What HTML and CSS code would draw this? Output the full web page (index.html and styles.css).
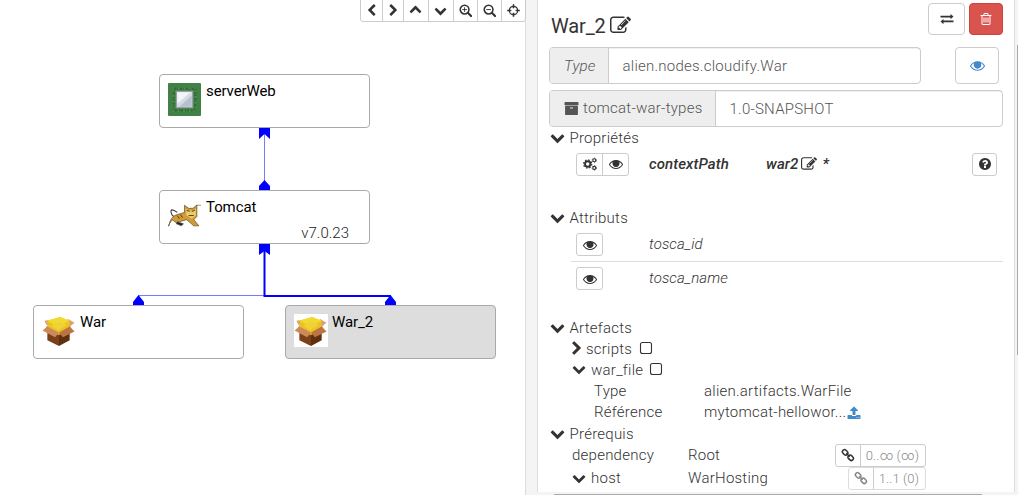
FILE: index.html
```html
<!DOCTYPE html>
<html lang="fr">
<head>
<meta charset="utf-8">
<title>Topology</title>
<link rel="stylesheet" href="styles.css">
</head>
<body>
<svg class="defs" aria-hidden="true">
<symbol id="left" viewBox="0 0 1792 1792"><path d="M1427 301l-531 531 531 531q19 19 19 45t-19 45l-166 166q-19 19-45 19t-45-19l-742-742q-19-19-19-45t19-45l742-742q19-19 45-19t45 19l166 166q19 19 19 45t-19 45z"/></symbol>
<symbol id="down" viewBox="0 0 1792 1792"><path d="M1683 808l-742 741q-19 19-45 19t-45-19l-742-741q-19-19-19-45.5t19-45.5l166-165q19-19 45-19t45 19l531 531 531-531q19-19 45-19t45 19l166 165q19 19 19 45.5t-19 45.5z"/></symbol>
<symbol id="eye" viewBox="0 0 1792 1792"><path d="M1664 960q-152-236-381-353 61 104 61 225 0 185-131.5 316.5t-316.5 131.5-316.5-131.5-131.5-316.5q0-121 61-225-229 117-381 353 133 205 333.5 326.5t434.5 121.5 434.5-121.5 333.5-326.5zM1792 960q0 34-20 69-140 230-376.500 368.500t-499.500 138.500-499.500-139-376.500-368q-20-35-20-69t20-69q140-229 376.500-368t499.500-139 499.500 139 376.500 368q20 35 20 69z"/><path d="M896 420a400 400 0 1 0 1 0zM900 545q34 0 34 40t-34 40q-150 10-170 170-5 40-40 40t-40-40q15-205 250-250z" fill-rule="evenodd"/></symbol>
<symbol id="edit" viewBox="0 0 1792 1792"><path d="M888 1184l116-116-152-152-116 116v56h96v96h56zm440-720q-16-16-33 1l-350 350q-17 17-1 33t33-1l350-350q17-17 1-33zm80 594v190q0 119-84.5 203.5t-203.5 84.5h-832q-119 0-203.5-84.5t-84.5-203.5v-832q0-119 84.5-203.5t203.5-84.5h832q63 0 117 25 15 7 18 23 3 17-9 29l-49 49q-14 14-32 8-23-6-45-6h-832q-66 0-113 47t-47 113v832q0 66 47 113t113 47h832q66 0 113-47t47-113v-126q0-13 9-22l64-64q15-15 35-7t20 29zm-96-738l288 288-672 672h-288v-288zm444 132l-92 92-288-288 92-92q28-28 68-28t68 28l152 152q28 28 28 68t-28 68z"/></symbol>
<symbol id="archive" viewBox="0 0 1792 1792"><path d="M1088 832q0-26-19-45t-45-19h-256q-26 0-45 19t-19 45 19 45 45 19h256q26 0 45-19t19-45zm576-192v960q0 26-19 45t-45 19h-1408q-26 0-45-19t-19-45v-960q0-26 19-45t45-19h1408q26 0 45 19t19 45zm64-448v256q0 26-19 45t-45 19h-1536q-26 0-45-19t-19-45v-256q0-26 19-45t45-19h1536q26 0 45 19t19 45z"/></symbol>
<symbol id="upload" viewBox="0 0 1792 1792"><path d="M1344 1472q0-26-19-45t-45-19-45 19-19 45 19 45 45 19 45-19 19-45zm256 0q0-26-19-45t-45-19-45 19-19 45 19 45 45 19 45-19 19-45zm128-224v320q0 40-28 68t-68 28h-1472q-40 0-68-28t-28-68v-320q0-40 28-68t68-28h427q21 56 70.5 92t110.5 36h256q61 0 110.5-36t70.5-92h427q40 0 68 28t28 68zm-325-648q-17 40-59 40h-256v448q0 26-19 45t-45 19h-256q-26 0-45-19t-19-45v-448h-256q-42 0-59-40-17-39 14-69l448-448q18-19 45-19t45 19l448 448q31 30 14 69z"/></symbol>
<symbol id="trash" viewBox="0 0 1792 1792"><path d="M704 736v576q0 14-9 23t-23 9h-64q-14 0-23-9t-9-23v-576q0-14 9-23t23-9h64q14 0 23 9t9 23zm256 0v576q0 14-9 23t-23 9h-64q-14 0-23-9t-9-23v-576q0-14 9-23t23-9h64q14 0 23 9t9 23zm256 0v576q0 14-9 23t-23 9h-64q-14 0-23-9t-9-23v-576q0-14 9-23t23-9h64q14 0 23 9t9 23zm128 724v-948h-896v948q0 22 7 40.5t14.5 27 10.5 8.5h832q3 0 10.5-8.5t14.5-27 7-40.5zm-672-1076h448l-48-117q-7-9-17-11h-317q-10 2-17 11zm928 32v64q0 14-9 23t-23 9h-96v948q0 83-47 143.5t-113 60.5h-832q-66 0-113-58.5t-47-141.5v-952h-96q-14 0-23-9t-9-23v-64q0-14 9-23t23-9h309l70-167q15-37 54-63t79-26h320q40 0 79 26t54 63l70 167h309q14 0 23 9t9 23z"/></symbol>
<symbol id="help" viewBox="0 0 1792 1792"><path d="M1024 1376v-192q0-14-9-23t-23-9h-192q-14 0-23 9t-9 23v192q0 14 9 23t23 9h192q14 0 23-9t9-23zm256-672q0-88-55.5-163t-138.5-116-170-41q-243 0-371 213-15 24 8 42l132 100q7 6 19 6 16 0 25-12 53-68 86-92 34-24 86-24 48 0 85.5 26t37.5 59q0 38-20 61t-68 45q-63 28-115.5 86.5t-52.5 125.5v36q0 14 9 23t23 9h192q14 0 23-9t9-23q0-19 21.5-49.5t54.5-49.5q32-18 49-28.5t46-35 44.5-48 28-60.5 12.5-81zm384 192q0 209-103 385.5t-279.5 279.5-385.5 103-385.5-103-279.5-279.5-103-385.5 103-385.5 279.5-279.5 385.5-103 385.5 103 279.5 279.5 103 385.5z"/></symbol>
<symbol id="box" viewBox="0 0 14 14"><rect x="1.500" y="1.500" width="11" height="11" rx="2" fill="none" stroke="currentColor" stroke-width="1.100"/></symbol>
<symbol id="exchange" viewBox="0 0 14 14"><path d="M.5 3.800h10V1.900L13.500 4.600l-3 2.700V5.400H.5zM13.500 8.600h-10V6.900L.5 9.500l3 2.700v-1.900h10z"/></symbol>
<symbol id="plus" viewBox="0 0 14 14"><circle cx="6" cy="6" r="4.700" fill="none" stroke="currentColor" stroke-width="1.700"/><path d="M9.500 9.500l3.500 3.500" stroke="currentColor" stroke-width="2.300" stroke-linecap="round"/><path d="M3.500 6h5M6 3.500v5" stroke="currentColor"/></symbol>
<symbol id="minus" viewBox="0 0 14 14"><circle cx="6" cy="6" r="4.700" fill="none" stroke="currentColor" stroke-width="1.700"/><path d="M9.500 9.500l3.500 3.500" stroke="currentColor" stroke-width="2.300" stroke-linecap="round"/><path d="M3.500 6h5" stroke="currentColor"/></symbol>
<symbol id="cross" viewBox="0 0 14 14"><circle cx="7" cy="7" r="4.500" fill="none" stroke="currentColor" stroke-width="1.300"/><path d="M7 .2v4.500M7 9.300v4.500M.2 7h4.500M9.300 7h4.500" stroke="currentColor" stroke-width="1.700"/></symbol>
<symbol id="gears" viewBox="0 0 14 14"><circle cx="4.700" cy="7" r="2.700" fill="none" stroke="currentColor" stroke-width="1.900"/><circle cx="4.700" cy="7" r="4.100" fill="none" stroke="currentColor" stroke-width="1.200" stroke-dasharray="1.600 1.620"/><circle cx="11.300" cy="3.300" r="1.500" fill="none" stroke="currentColor" stroke-width="1.100"/><circle cx="11.300" cy="3.300" r="2.300" fill="none" stroke="currentColor" stroke-width=".7" stroke-dasharray="1.200 1.200"/><circle cx="11.300" cy="10.900" r="1.500" fill="none" stroke="currentColor" stroke-width="1.100"/><circle cx="11.300" cy="10.900" r="2.300" fill="none" stroke="currentColor" stroke-width=".7" stroke-dasharray="1.200 1.200"/></symbol>
<symbol id="link" viewBox="0 0 14 14"><g fill="none" stroke="currentColor" stroke-width="1.500"><rect x="1.300" y="2.300" width="5.800" height="4.200" rx="2" transform="rotate(45 4.200 4.300)"/><rect x="6.900" y="7.700" width="5.800" height="4.200" rx="2" transform="rotate(45 9.800 9.700)"/><path d="M5.300 5.300l3.400 3.400"/></g></symbol>
<symbol id="crate" viewBox="0 0 34 34"><path d="M5 17l12 3v13L5 27z" fill="#7c4019"/><path d="M17 20l11-5v12l-11 6z" fill="#5f300f"/><path d="M2 7l7-1v8l-5-3zM26 5l7 4-6 5z" fill="#d9a07a"/><path d="M4 13L17 8l12 5v2l-12 7L4 16z" fill="#d6a416"/><path d="M5 7l13-4 10 4v7l-12 6L5 14z" fill="#e8c422"/><path d="M5 7l13-4 10 4-12 6z" fill="#f3d92f"/><path d="M9 12l8-4 8 3-9 6z" fill="#f0d238"/><path d="M5 13L0 17l13 7 4-5z" fill="#cc8a5c"/><path d="M17 19l11-6 5 5-12 6z" fill="#bd7445"/></symbol>
</svg>
<div class="app">
<main class="canvas">
  <div class="toolbar">
    <span><svg><use href="#left"/></svg></span><span><svg class="flip"><use href="#left"/></svg></span><span><svg class="turn"><use href="#down"/></svg></span><span><svg><use href="#down"/></svg></span><span><svg><use href="#plus"/></svg></span><span><svg><use href="#minus"/></svg></span><span><svg><use href="#cross"/></svg></span>
  </div>
  <svg class="links" viewBox="0 0 525 495">
    <path d="M264.500 130v56" stroke="#7a7aff" stroke-width="1"/>
    <path d="M138.500 300v-4.500H264" stroke="#7a7aff" fill="none"/>
    <path d="M264.500 244v52h125.500v6" stroke="#00f" stroke-width="2" fill="none"/>
    <g fill="#00f"><path d="M259 128h11v11l-5.500-5-5.500 5zM259 190v-4l5.500-6 5.500 6v4zM259 243h11v12l-5.500-4-5.500 4zM133 306v-4l5.500-7 5.500 7v4zM385 306v-4l5.500-7 5.500 7v4z"/></g>
  </svg>
  <div class="node server"><svg class="pic" viewBox="0 0 32 32"><rect width="32" height="32" rx="1" fill="#418145"/><rect x="5.500" y="5.500" width="21" height="21" fill="none" stroke="#2f6534" stroke-width="2" stroke-dasharray="2 1 1 2"/><rect x="5" y="5" width="22" height="22" fill="none" stroke="#7fa565" stroke-width=".8" stroke-dasharray="1 4"/><rect x="8" y="8" width="16" height="16" fill="#d5dae5" stroke="#8c999d"/><path d="M9 9h13L9 20z" fill="#f2f4f8"/><path d="M23 12v11H11z" fill="#b7c0cf"/></svg><b>serverWeb</b></div>
  <div class="node tomcat"><svg class="pic" viewBox="0 0 32 32"><path d="M9 14q-7-5-6 0t6 4" fill="none" stroke="#333"/><path d="M1 27q1-9 8-11l7-2V7l4 3h4l4-3v11l-3 3 5 6-5 0-7-6-7 2-3 1-4-3-4 6z" fill="#d19b38" stroke="#55401a" stroke-width=".6"/><path d="M17 10l3 2h5l2-2v7l-4 3-5-3z" fill="#eccb6c"/><path d="M18 12l3 1M26 12l-3 1M20 17h5M9 17l2 3M12 16l2 3" stroke="#332710" stroke-width=".8"/><path d="M9 23l6 2-2 2-5-2zM27 7h5" fill="#222" stroke="#555" stroke-width=".6"/></svg><b>Tomcat</b><i>v7.0.23</i></div>
  <div class="node war"><svg class="pic"><use href="#crate"/></svg><b>War</b></div>
  <div class="node war2"><svg class="pic"><use href="#crate"/></svg><b>War_2</b></div>
</main>
<aside class="panel">
  <header class="title"><h1>War_2</h1><svg><use href="#edit"/></svg><span class="swap"><svg><use href="#exchange"/></svg></span><span class="del"><svg><use href="#trash"/></svg></span></header>
  <div class="field-row"><div class="field type"><em>Type</em><span>alien.nodes.cloudify.War</span></div><span class="view"><svg><use href="#eye"/></svg></span></div>
  <div class="field archive"><label><svg><use href="#archive"/></svg>tomcat-war-types</label><span>1.0-SNAPSHOT</span></div>
  <div class="head"><svg><use href="#down"/></svg>Propriétés</div>
  <div class="prop main"><div class="group"><span><svg><use href="#gears"/></svg></span><span><svg><use href="#eye"/></svg></span></div><em>contextPath</em><em class="value">war2<svg><use href="#edit"/></svg>*</em><div class="group help"><span><svg><use href="#help"/></svg></span></div></div>
  <div class="head attr"><svg><use href="#down"/></svg>Attributs</div>
  <div class="prop"><div class="group"><span><svg><use href="#eye"/></svg></span></div><em>tosca_id</em></div>
  <div class="prop ruled"><div class="group"><span><svg><use href="#eye"/></svg></span></div><em>tosca_name</em></div>
  <div class="head arte"><svg><use href="#down"/></svg>Artefacts</div>
  <div class="sub scripts"><svg class="flip" viewBox="300 0 1280 1792"><use href="#left" width="1792" height="1792"/></svg>scripts<svg class="check"><use href="#box"/></svg></div>
  <div class="sub"><svg><use href="#down"/></svg>war_file<svg class="check"><use href="#box"/></svg></div>
  <div class="detail"><span>Type</span><span>alien.artifacts.WarFile</span></div>
  <div class="detail"><span>Référence</span><span>mytomcat-hellowor...</span><svg><use href="#upload"/></svg></div>
  <div class="head req"><svg><use href="#down"/></svg>Prérequis</div>
  <div class="need"><span class="name">dependency</span><span>Root</span><div class="group count"><span><svg><use href="#link"/></svg></span><small>0..∞ (∞)</small></div></div>
  <div class="need host"><span class="name"><svg><use href="#down"/></svg>host</span><span>WarHosting</span><div class="group count off"><span><svg><use href="#link"/></svg></span><small>1..1 (0)</small></div></div>
</aside>
<div class="vbar"></div>
<div class="hbar"></div>
</div>
</body>
</html>
```
FILE: styles.css
```css
* { box-sizing: border-box; }
body { margin: 0; width: 1018px; height: 495px; overflow: hidden; background: #f4f4f4; color: #333; font: 300 15px/21px Roboto, "DejaVu Sans", sans-serif; letter-spacing: .24px; }
svg { flex: none; fill: currentColor; width: 14px; height: 14px; }
.defs { position: absolute; width: 0; height: 0; }
.app { display: grid; grid-template-columns: 526px 11px 478px 3px; grid-template-rows: 492px 3px; height: 495px; }
.canvas { position: relative; grid-row: 1 / 3; background: #fff; border-right: 1px solid #ddd; }
.panel { grid-column: 3; background: #fff; border: solid #ddd; border-width: 0 1px; padding: 0 11px; overflow: hidden; }
.vbar { grid-column: 4; margin: 45px 0 137px 2px; background: #aaa; }
.hbar { grid-column: 3; margin: 2px 33px 0 17px; background: #aaa; }
.toolbar { position: absolute; left: 360px; top: -1px; display: flex; height: 23px; border: 1px solid #ccc; border-radius: 0 0 3px 3px; background: #fff; }
.toolbar span { display: grid; place-items: center; width: 24px; border-left: 1px solid #ccc; }
.toolbar span:nth-child(-n+2) { width: 21px; }
.toolbar span:nth-child(3), .toolbar span:nth-child(4) { width: 25px; padding-right: 1px; }
.toolbar span:first-child { border-left: 0; }
.toolbar span:last-child { padding-right: 1px; }
.toolbar svg { width: 13px; height: 13px; }
.flip { transform: scaleX(-1); }
.turn { transform: scaleY(-1); }
.links { position: absolute; left: 0; top: 0; width: 525px; height: 495px; fill: none; }
.node { position: absolute; width: 211px; height: 54px; border: 1px solid #aaa; border-radius: 4px; background: #fff; color: #000; padding: 7px 8px; display: flex; gap: 5px; }
.node b { font-weight: 400; line-height: 19px; letter-spacing: -.1px; }
.node i { position: absolute; right: 20px; bottom: -1px; font-style: normal; color: #222; letter-spacing: 0; }
.pic { width: 33px; height: 33px; }
.server { left: 159px; top: 74px; }
.server .pic { margin-top: 1px; }
.tomcat { left: 159px; top: 190px; }
.war { left: 33px; top: 305px; }
.war2 { left: 285px; top: 305px; background: #ddd; }
.war2 .pic { background: #fff; }
.war .pic, .war2 .pic { width: 34px; margin-right: -1px; margin-top: 1px; }
.title { display: flex; height: 47px; padding: 3px 0 0 2px; margin-right: 0; align-items: flex-start; }
.title h1 { font: 400 20px/46px Roboto, sans-serif; letter-spacing: -.15px; margin: 0 4px 0 0; }
.title > svg { width: 21px; height: 21px; margin-top: 12px; }
.title span { display: grid; place-items: center; height: 32px; border: 1px solid #ccc; border-radius: 4px; }
.title .swap { width: 37px; margin: 0 4px 0 auto; }
.title .del { width: 34px; background: #d9534f; border-color: #d43f3a; color: #fff; }
.title .del svg { width: 14px; }
.field-row { display: flex; justify-content: space-between; padding-right: 4px; }
.field { display: flex; height: 37px; border: 1px solid #ccc; border-radius: 4px; line-height: 37px; color: #555; width: 454px; }
.field em, .field label { background: #eee; border-right: 1px solid #ccc; padding: 0 13px 0 14px; border-radius: 3px 0 0 3px; }
.field em { width: 59px; padding-right: 0; }
.field label { width: 166px; display: flex; align-items: center; gap: 4px; padding-right: 0; line-height: 35px; }
.field > span { padding-left: 13.500px; box-shadow: inset 0 1px 1px #0001; flex: 1; }
.type { width: 372px; }
.view { display: grid; place-items: center; width: 44px; height: 37px; border: 1px solid #ccc; border-radius: 4px; color: #428bca; }
.view svg { width: 15px; height: 15px; }
.archive { margin-top: 6px; }
.archive label svg { width: 15px; height: 15px; margin-bottom: 1px; }
.head { display: flex; align-items: center; gap: 5px; height: 21px; padding-top: 2px; padding-left: .5px; }
.head svg { width: 15px; height: 15px; margin-bottom: 3px; }
.prop { display: grid; grid-template-columns: 73px 117px 1fr 25px; align-items: center; height: 33px; margin-left: 22px; padding-left: 5px; padding-right: 6px; }
.prop em { letter-spacing: .1px; }
.prop .value { display: flex; align-items: center; }
.value svg { margin: 0 5px 0 3px; width: 16px; height: 16px; }
.main { font-weight: 500; height: 32px; }
.group { display: flex; width: max-content; height: 23px; border: 1px solid #ccc; border-radius: 3px; }
.group > span { display: grid; place-items: center; width: 25px; }
.group > * + * { border-left: 1px solid #ccc; }
.main .group > span + span { width: 26px; }
.help > span { width: 23px; }
.attr { margin-top: 27px; }
.ruled { border-top: 1px solid #ddd; height: 34px; }
.arte { margin-top: 22px; }
.sub { display: flex; align-items: center; gap: 5px; height: 21px; padding-top: 2px; padding-left: 23px; }
.sub .check { margin-left: 1px; }
.sub svg { margin-bottom: 3px; }
.scripts > .flip { width: 11px; height: 15px; margin-right: -1px; margin-left: -1px; }
.scripts .check { margin-left: 2px; }
.detail { display: flex; align-items: center; height: 21px; padding-top: 2px; padding-left: 45px; }
.detail span:first-child { width: 110px; }
.detail svg { margin-left: 1px; color: #428bca; }
.req { margin-top: 1px; }
.need { display: flex; align-items: center; height: 22px; padding-left: 23px; padding-right: 77px; }
.host { height: 24px; }
.name { width: 116px; display: flex; align-items: center; gap: 5px; }
.count { margin-left: auto; flex: none; }
.count > span { width: 24px; padding: 0; }
.count small { font-size: 13px; letter-spacing: .1px; padding: 0 6px 0 5px; color: #888; }
.off > span { color: #888; }
.off { border-color: #ddd; }
```
